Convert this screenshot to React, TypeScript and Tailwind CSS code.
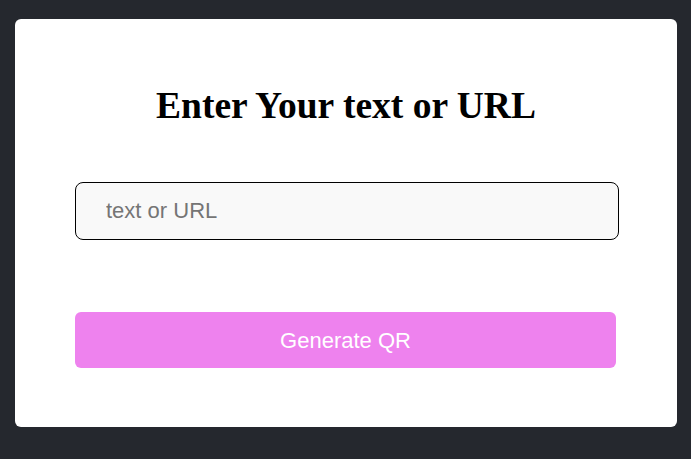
export default function App() {
  return (
    <div className="min-h-screen w-full bg-[#25282e] pt-[19px] pl-[15px]">
      <div className="w-[662px] h-[408px] rounded-[6px] bg-white flex flex-col items-start pl-[60px] pt-[66px]">
        <h1 className="w-[542px] text-center font-['Liberation_Serif',serif] font-bold text-[37.5px] leading-[42px] text-black">
          Enter Your text or URL
        </h1>
        <input
          type="text"
          placeholder="text or URL"
          className="mt-[55px] w-[544px] h-[58px] rounded-[8px] border border-black bg-[#f9f9f9] pl-[30px] font-['Liberation_Sans',sans-serif] text-[22px] text-black placeholder:text-[#757575] outline-none"
        />
        <button className="mt-[72px] w-[541px] h-[56px] rounded-[6px] bg-[#ee82ee] font-['Liberation_Sans',sans-serif] text-[22px] text-white">
          Generate QR
        </button>
      </div>
    </div>
  );
}
